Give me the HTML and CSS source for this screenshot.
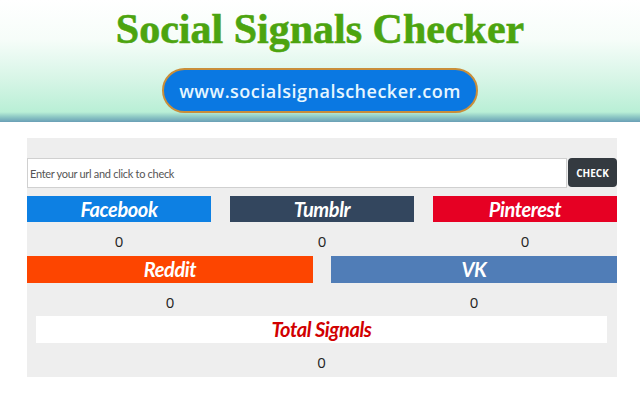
FILE: index.html
```html
<!DOCTYPE html>
<html>
<head>
<meta charset="utf-8">
<link rel="stylesheet" href="styles.css">
</head>
<body>
<header class="hero">
  <h1 class="title">Social Signals Checker</h1>
  <div class="pill">www.socialsignalschecker.com</div>
</header>
<main class="panel">
  <form class="search">
    <input class="url" type="text" placeholder="Enter your url and click to check">
    <button class="check" type="button">CHECK</button>
  </form>
  <div class="row three">
    <div class="cell"><div class="bar fb">Facebook</div><div class="val">0</div></div>
    <div class="cell"><div class="bar tb">Tumblr</div><div class="val">0</div></div>
    <div class="cell"><div class="bar pi">Pinterest</div><div class="val">0</div></div>
  </div>
  <div class="row two">
    <div class="cell"><div class="bar rd">Reddit</div><div class="val">0</div></div>
    <div class="cell"><div class="bar vk">VK</div><div class="val">0</div></div>
  </div>
  <div class="total">
    <div class="bar tot">Total Signals</div>
    <div class="val">0</div>
  </div>
</main>
</body>
</html>
```
FILE: styles.css
```css
* { box-sizing: border-box; }
html, body { margin: 0; padding: 0; background: #fff; }
body { width: 640px; height: 400px; overflow: hidden; font-family: "Open Sans", sans-serif; }

.hero {
  height: 122px;
  background: linear-gradient(to bottom, #ffffff 0px, #f6fdf9 40px, #d6f5e6 80px, #b9efd6 112px, #8cc7c4 117px, #6a9fb6 122px);
  display: flex;
  flex-direction: column;
  align-items: center;
  padding-top: 4px;
}
.title {
  margin: 0;
  font-family: "Liberation Serif", serif;
  font-weight: 700;
  font-size: 42px;
  line-height: 50px;
  color: #4ca40f;
  letter-spacing: 0;
  white-space: nowrap;
  -webkit-text-stroke: 0.6px #4ca40f;
}
.pill {
  margin-top: 14px;
  width: 316px;
  height: 45px;
  border-radius: 23px;
  background: #0a78e2;
  border: 2px solid #c98e3a;
  color: #e6f6ff;
  font-family: "Open Sans", sans-serif;
  font-size: 18px;
  font-weight: 600;
  display: flex;
  align-items: center;
  justify-content: center;
  letter-spacing: 0.5px;
}

.panel {
  margin: 16px 0 0 27px;
  width: 590px;
  background: #eeeeee;
  padding-top: 20px;
}
.search { display: flex; height: 30px; margin: 0 0 8px 0; }
.url {
  flex: 1;
  height: 30px;
  border: 1px solid #d0d0d0;
  background: #fff;
  padding: 0 2px;
  font-family: "Lato", sans-serif;
  font-size: 11px;
  letter-spacing: -0.3px;
  outline: none;
}
.url::placeholder { color: #555; }
.check {
  width: 49px;
  height: 29px;
  margin-left: 1px;
  border: none;
  border-radius: 4px;
  background: #343a40;
  color: #fff;
  font-family: "Open Sans", sans-serif;
  font-weight: 700;
  font-size: 10px;
  padding: 0;
}

.row { display: grid; }
.three { grid-template-columns: 1fr 1fr 1fr; column-gap: 19px; }
.two { grid-template-columns: 1fr 1fr; column-gap: 18px; }

.bar {
  height: 26px;
  color: #fff;
  font-family: "Lato", sans-serif;
  font-style: italic;
  font-weight: 700;
  font-size: 20px;
  line-height: 26px;
  text-align: center;
  letter-spacing: -0.4px;
}
.val {
  height: 34px;
  padding-top: 4px;
  line-height: 30px;
  text-align: center;
  font-family: "Open Sans", sans-serif;
  font-weight: 400;
  font-size: 15px;
  color: #222;
}
.fb { background: #0d80e3; }
.tb { background: #33465e; }
.pi { background: #e60023; }
.rd { background: #fd4500; height: 27px; }
.vk { background: #507db7; height: 27px; }
.two .val { height: 33px; }
.total { padding: 0 10px 0 9px; }
.tot { background: #fff; color: #d10000; height: 27px; }
```
